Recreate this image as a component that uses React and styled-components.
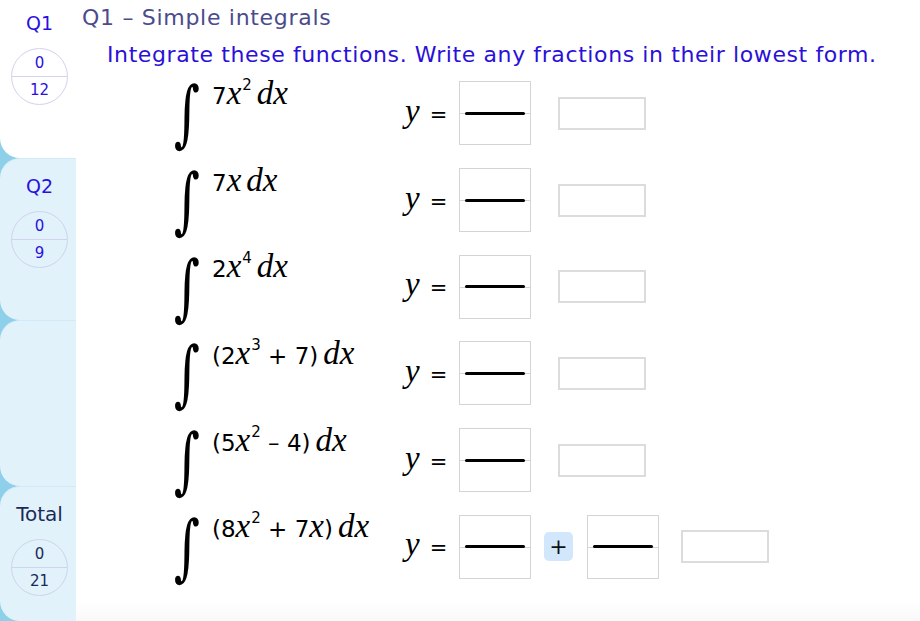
import React from 'react';
import styled, { createGlobalStyle } from 'styled-components';

const GlobalStyle = createGlobalStyle`
    html, body {
        margin: 0;
        padding: 0;
        background: #fff;
        font-family: "DejaVu Sans", Verdana, sans-serif;
    }
`;

const questions = [
    { expr: [['n', '7'], ['v', 'x'], ['sup', '2'], ['gap'], ['v', 'dx']] },
    { expr: [['n', '7'], ['v', 'x'], ['gap'], ['v', 'dx']] },
    { expr: [['n', '2'], ['v', 'x'], ['sup', '4'], ['gap'], ['v', 'dx']] },
    { expr: [['n', '(2'], ['v', 'x'], ['sup', '3'], ['n', '\u00a0+ 7)'], ['gap'], ['v', 'dx']] },
    { expr: [['n', '(5'], ['v', 'x'], ['sup', '2'], ['n', '\u00a0\u2013 4)'], ['gap'], ['v', 'dx']] },
    { expr: [['n', '(8'], ['v', 'x'], ['sup', '2'], ['n', '\u00a0+ 7'], ['v', 'x'], ['n', ')'], ['gap'], ['v', 'dx']], split: true },
];

const Expression = ({ parts }) => (
    <ExprText>
        {parts.map((p, i) => {
            if (p[0] === 'n') return <Num key={i}>{p[1]}</Num>;
            if (p[0] === 'v') return <Var key={i}>{p[1]}</Var>;
            if (p[0] === 'sup') return <Sup key={i}>{p[1]}</Sup>;
            return <Gap key={i} />;
        })}
    </ExprText>
);

const Fraction = () => (
    <FracBox>
        <FracBar />
    </FracBox>
);

const App = () => {
    return (
        <>
            <GlobalStyle />
            <Page>
                <Sidebar>
                    <Tab $active $h={158}>
                        <TabLabel>Q1</TabLabel>
                        <Score><span>0</span><span>12</span></Score>
                    </Tab>
                    <Tab $h={162}>
                        <TabLabel>Q2</TabLabel>
                        <Score><span>0</span><span>9</span></Score>
                    </Tab>
                    <Tab $h={166} />
                    <Tab $grow>
                        <TabLabel $total>Total</TabLabel>
                        <Score $total><span>0</span><span>21</span></Score>
                    </Tab>
                </Sidebar>
                <Main>
                    <Title>Q1 &ndash; Simple integrals</Title>
                    <Instruction>Integrate these functions. Write any fractions in their lowest form.</Instruction>
                    <Rows>
                        {questions.map((q, i) => (
                            <Row key={i}>
                                <ExprCell>
                                    <IntegralSign>&int;</IntegralSign>
                                    <Expression parts={q.expr} />
                                </ExprCell>
                                <YEq>
                                    <Var>y</Var>
                                    <Equals>=</Equals>
                                </YEq>
                                <Fraction />
                                {q.split && (
                                    <>
                                        <PlusButton>+</PlusButton>
                                        <Fraction />
                                    </>
                                )}
                                <AnswerInput $split={q.split} />
                            </Row>
                        ))}
                    </Rows>
                    <Footer />
                </Main>
            </Page>
        </>
    );
};

const Page = styled.div`
    display: flex;
    width: 920px;
    height: 621px;
    overflow: hidden;
`;

const Sidebar = styled.div`
    width: 73px;
    padding-left: 3px;
    background-color: #8ecfea;
    display: flex;
    flex-direction: column;
    flex-shrink: 0;
`;

const Tab = styled.div`
    height: ${p => (p.$h ? `${p.$h}px` : 'auto')};
    flex: ${p => (p.$grow ? '1' : 'none')};
    background-color: ${p => (p.$active ? '#ffffff' : '#e1f2fb')};
    border-radius: ${p => (p.$active ? '0 0 0 20px' : '20px 0 0 20px')};
    border-top: ${p => (p.$active ? 'none' : '1px solid #d2eaf7')};
    box-sizing: border-box;
    display: flex;
    flex-direction: column;
    align-items: center;
    padding-top: ${p => (p.$active ? '11px' : '15px')};
    margin-left: -3px;
    padding-left: 3px;
`;

const TabLabel = styled.div`
    font-size: ${p => (p.$total ? '20px' : '19px')};
    color: ${p => (p.$total ? '#1b2a58' : '#2a10e0')};
    line-height: 24px;
    margin-bottom: 13px;
`;

const Score = styled.div`
    width: 55px;
    height: 55px;
    border: 1px solid #d2d2ef;
    border-radius: 50%;
    display: flex;
    flex-direction: column;
    overflow: hidden;
    font-size: 15px;
    color: ${p => (p.$total ? '#1b2a58' : '#2a10e0')};
    span {
        flex: 1;
        display: flex;
        align-items: center;
        justify-content: center;
    }
    span:first-child {
        border-bottom: 1px solid #d2d2ef;
        padding-top: 1px;
    }
    span:last-child {
        padding-bottom: 1px;
    }
`;

const Main = styled.div`
    flex: 1;
    display: flex;
    flex-direction: column;
    padding-left: 6px;
    position: relative;
`;

const Title = styled.div`
    font-size: 22px;
    letter-spacing: 0.7px;
    color: #4b4b8c;
    margin-top: 5px;
    line-height: 26px;
`;

const Instruction = styled.div`
    font-size: 22px;
    letter-spacing: 0.6px;
    color: #2a10d8;
    margin-top: 11px;
    margin-left: 25px;
    line-height: 26px;
`;

const Rows = styled.div`
    display: flex;
    flex-direction: column;
    padding-left: 88px;
    margin-top: 2px;
`;

const Row = styled.div`
    height: 86.7px;
    display: flex;
    align-items: center;
`;

const ExprCell = styled.div`
    width: 230px;
    display: flex;
    align-items: center;
`;

const IntegralSign = styled.span`
    font-family: "DejaVu Serif", serif;
    font-size: 50px;
    display: inline-block;
    transform: scaleY(1.45);
    width: 26px;
    margin-left: 4px;
    margin-right: 12px;
    color: #000;
    line-height: 1;
`;

const ExprText = styled.span`
    display: inline-flex;
    align-items: baseline;
    margin-bottom: 40px;
    white-space: nowrap;
`;

const Num = styled.span`
    font-family: "DejaVu Sans", sans-serif;
    font-size: 23px;
    color: #000;
`;

const Var = styled.span`
    font-family: "Liberation Serif", serif;
    font-style: italic;
    font-size: 33px;
    color: #000;
`;

const Sup = styled.span`
    font-family: "DejaVu Sans", sans-serif;
    font-size: 15px;
    position: relative;
    top: -14px;
    margin-left: 1px;
    color: #000;
`;

const Gap = styled.span`
    width: 5px;
`;

const YEq = styled.div`
    width: 59px;
    display: flex;
    align-items: baseline;
    margin-bottom: 4px;
    ${Var} {
        margin-left: 5px;
    }
`;

const Equals = styled.span`
    font-family: "DejaVu Sans", sans-serif;
    font-size: 21px;
    margin-left: 10px;
`;

const FracBox = styled.div`
    width: 70px;
    height: 62px;
    border: 1px solid #d4d4d4;
    display: flex;
    align-items: center;
    justify-content: center;
    position: relative;
    flex-shrink: 0;
    &::before {
        content: '';
        position: absolute;
        left: 0;
        right: 0;
        top: 50%;
        border-top: 1px solid #d4d4d4;
    }
`;

const FracBar = styled.div`
    width: 60px;
    height: 3px;
    border-radius: 2px;
    background: #000;
    position: relative;
`;

const PlusButton = styled.div`
    width: 29px;
    height: 29px;
    margin: 0 14px 0 13px;
    border-radius: 5px;
    background: #d2e7fb;
    display: flex;
    align-items: center;
    justify-content: center;
    font-size: 22px;
    color: #111;
    flex-shrink: 0;
`;

const AnswerInput = styled.div`
    width: 84px;
    height: 29px;
    border: 2px solid #dcdcdc;
    margin-left: ${p => (p.$split ? '22px' : '27px')};
    flex-shrink: 0;
`;

const Footer = styled.div`
    position: absolute;
    left: 0;
    right: 0;
    bottom: 0;
    height: 20px;
    background: linear-gradient(#ffffff, #f9f9f9);
`;

export default App;
